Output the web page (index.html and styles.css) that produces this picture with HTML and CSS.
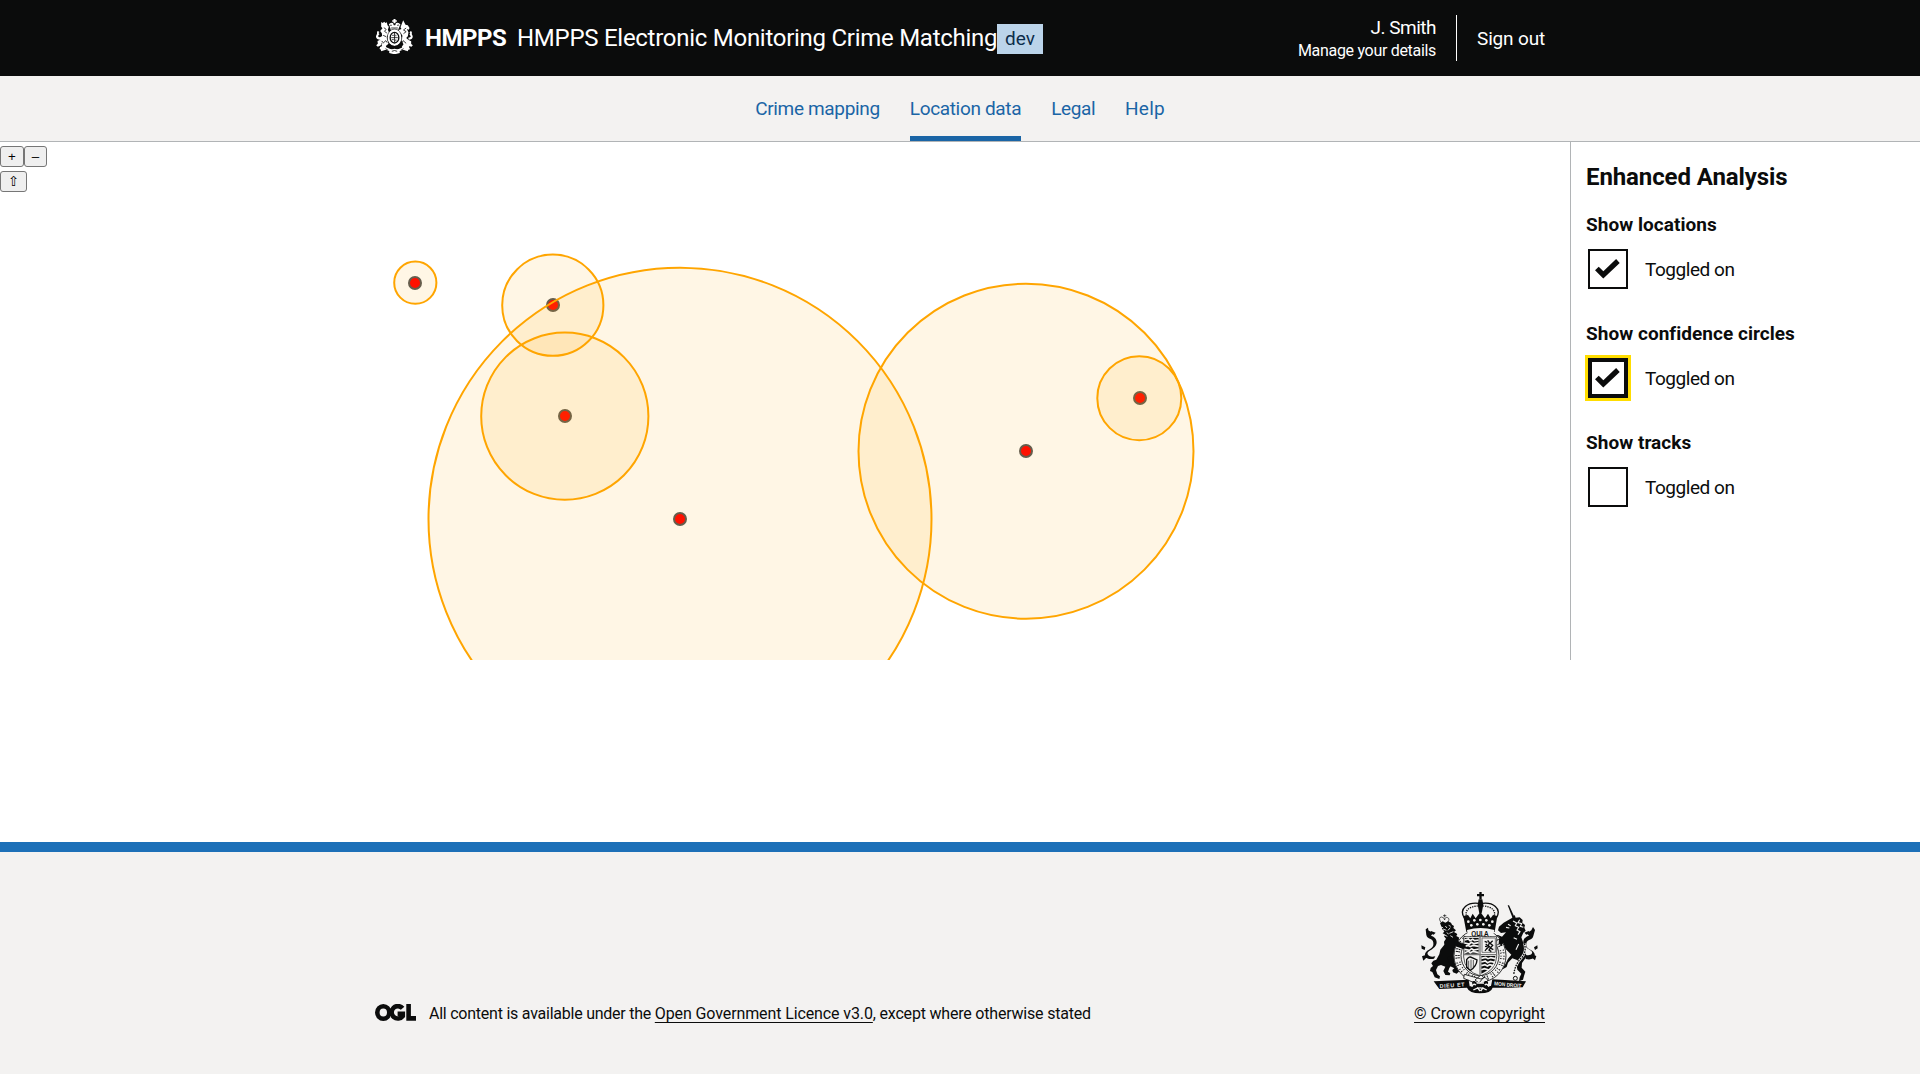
FILE: index.html
```html
<!DOCTYPE html>
<html lang="en">
<head>
<meta charset="utf-8">
<title>Location data</title>
<link rel="stylesheet" href="styles.css">
</head>
<body>
<header class="header">
  <div class="container header__inner">
    <div class="header__brand">
      <svg class="header__crest" viewBox="0 0 114 105" fill="currentColor">
        <path d="M54 0h6v4h4v4h-4v5h-6V8h-4V4h4zM40 16q5-6 12-4l3 7h4l3-7q9-2 13 5l-5 10-2 6q-11-3-22 0l-2-7z"/>
        <path d="M17 9l5 3 4-4 4 4 4-2 2 9 4 4-3 9 4 9-7 13 5 20-8 7 3 9-12 3-10-3 2-6 7-1-3-6 4-10-7-2-4-9 9-5-1-8-5-7 7-8-4-5z"/>
        <path d="M14 84l12-5 6 6q25 14 50 0l6-6 13 5-4 13-14-5q-26 13-52 0l-14 5zM42 93l15-4 15 4 1 9-16 4-16-4z"/>
        <path d="M14 62C3 62-1 53 3 48c4-5-1-9 4-12l5 3-3 3 3 4c-5 4-7 9 5 10zM6 66l8-4 6 7-4 10-9 4-5-4 5-5z"/>
        <path d="M83 4l7 13 7 2 5 8-2 5-6-2 5 10-2 12-5 5 10 8 5 12-7 6 4 8-13 3-10-3-2-8 5-7-7-13 4-13-9-11-5 1 3-7 8-3-3-5z"/>
        <path d="M100 62c11 0 14-9 10-14-3-5 2-9-4-12l-4 4 2 3-2 4c5 4 6 8-4 9zM107 67l-7-3-6 7 4 9 10 3 4-4-5-4z"/>
        <ellipse cx="57" cy="56" rx="21" ry="25"/>
        <g fill="none" stroke="#0b0c0c">
          <ellipse cx="57" cy="56" rx="22" ry="26" stroke-width="1.6"/>
          <ellipse cx="57" cy="56" rx="13" ry="16" stroke-width="4"/>
          <path d="M57 42v28M47 56h20M50 49h5M61 47v5M49 62h6M61 61v6" stroke-width="2.4"/>
          <path d="M42 21q4-4 7-2M65 19q5-2 7 2M47 27h20M25 26l7 5-5 6 7 5M23 49l9 4M92 27l-8 6 8 5-8 6M22 73l9-8 4 6M92 73l-9-8-3 6M30 89l8 5M84 89l-8 5M49 97q8-5 16 0" stroke-width="2.4"/>
        </g>
      </svg>
      <span class="header__org">HMPPS</span>
      <span class="header__title">HMPPS Electronic Monitoring Crime Matching</span>
      <span class="header__tag">dev</span>
    </div>
    <div class="header__user">
      <div class="header__account">
        <span class="header__name">J. Smith</span>
        <span class="header__manage">Manage your details</span>
      </div>
      <span class="header__signout">Sign out</span>
    </div>
  </div>
</header>
<nav class="nav">
  <a class="nav__item">Crime mapping</a>
  <a class="nav__item nav__item--current">Location data</a>
  <a class="nav__item nav__item--legal">Legal</a>
  <a class="nav__item nav__item--help">Help</a>
</nav>
<main class="main">
  <div class="map">
    <svg class="map__canvas" viewBox="0 142 1570 518">
      <g class="map__points">
        <circle cx="415" cy="283" r="6"/>
        <circle cx="553" cy="305" r="6"/>
        <circle cx="565" cy="416" r="6"/>
        <circle cx="680" cy="519" r="6"/>
        <circle cx="1026" cy="451" r="6"/>
        <circle cx="1140" cy="398" r="6"/>
      </g>
      <g class="map__confidence">
        <circle cx="415.3" cy="282.7" r="21.1"/>
        <circle cx="552.8" cy="305.2" r="50.6"/>
        <circle cx="564.8" cy="416.2" r="83.6"/>
        <circle cx="680" cy="519.2" r="251.5"/>
        <circle cx="1026" cy="451.2" r="167.5"/>
        <circle cx="1139.3" cy="398.2" r="42"/>
      </g>
    </svg>
    <div class="map__controls">
      <div class="map__zoom"><button class="map__button">+</button><button class="map__button map__button--out">–</button></div>
      <button class="map__button map__button--north">⇧</button>
    </div>
  </div>
  <aside class="sidebar">
    <h2 class="sidebar__title">Enhanced Analysis</h2>
    <div class="toggle">
      <h3 class="toggle__title">Show locations</h3>
      <div class="toggle__row">
        <span class="checkbox"><svg class="checkbox__tick" viewBox="0 0 24 20"><path d="M1.8 10L8 16.2 22 2.8"/></svg></span>
        <span class="toggle__label">Toggled on</span>
      </div>
    </div>
    <div class="toggle">
      <h3 class="toggle__title">Show confidence circles</h3>
      <div class="toggle__row">
        <span class="checkbox checkbox--focus"><svg class="checkbox__tick" viewBox="0 0 24 20"><path d="M1.8 10L8 16.2 22 2.8"/></svg></span>
        <span class="toggle__label">Toggled on</span>
      </div>
    </div>
    <div class="toggle">
      <h3 class="toggle__title">Show tracks</h3>
      <div class="toggle__row">
        <span class="checkbox"></span>
        <span class="toggle__label">Toggled on</span>
      </div>
    </div>
  </aside>
</main>
<footer class="footer">
  <div class="container footer__inner">
    <div class="footer__licence">
      <svg class="footer__ogl" viewBox="0 0 41 17" fill="none" stroke="currentColor" stroke-width="4.6">
        <ellipse cx="8.3" cy="8.5" rx="6" ry="6.2"/>
        <path d="M27.6 4.3A6.2 6.2 0 1 0 27.8 12V9.8h-5.2"/>
        <path d="M33.6 0v14.4H41"/>
      </svg>
      <span class="footer__text">All content is available under the <a class="footer__link footer__link--licence">Open Government Licence v3.0</a><span class="footer__rest">, except where otherwise stated</span></span>
    </div>
    <div class="footer__copyright">
      <svg class="footer__crest" viewBox="60 30 360 315" fill="currentColor">
        <!-- crown -->
        <path d="M238 36h7v6h7v7h-7v9h-7v-9h-7v-7h7z"/>
        <path d="M236 58h11l3 16-5 26h-7l-5-26z"/>
        <g fill="none" stroke="currentColor">
          <path d="M193 114c-18-30 12-48 43-44M289 114c18-30-12-48-42-44" stroke-width="4"/>
          <path d="M201 114c-10-24 8-34 32-36M281 114c10-24-8-34-31-36" stroke-width="4" stroke-dasharray="4 3"/>
        </g>
        <path d="M190 108l14-3 7 10 7-14 9 14 14-19 14 19 9-14 8 14 7-10 13 3-8 48q-42-13-85 0z"/>
        <g fill="#f3f2f1"><circle cx="205" cy="125" r="4"/><circle cx="223" cy="121" r="4"/><circle cx="241" cy="120" r="4"/><circle cx="259" cy="121" r="4"/><circle cx="277" cy="125" r="4"/><circle cx="214" cy="136" r="4"/><circle cx="232" cy="133" r="4"/><circle cx="250" cy="133" r="4"/><circle cx="268" cy="136" r="4"/></g>
        <!-- lion -->
        <g fill="none" stroke="currentColor" stroke-width="2">
          <path d="M122 126q-8-14 3-15 8 1 9 9 1-10 9-7 7 3 1 13M129 107h10M134 103v9"/>
        </g>
        <path d="M120 129l8-5 8 4 8-4 9 4 3 6 6 4-2 6 8 7-6 5 10 6-3 6 9 5-2 5 12 9 15 4 4 9-9 5-12-3-13-5 3 12-9 17-5 16 16 5 9 10-3 10-4-4-12-7-13-2-7 10-4 11 7 5-2 6-13-1-6-12 6-13-13-5-9 3-6 12 4 13 8 6-2 8-14-5-7-16-7-3 2-9 7-6-5-8 6-8 9-3 9-16 3-14 12-15-1-9 6-9-6-7 4-5-8-4 5-6-6-6z"/>
        <path d="M142 232c15-9 28 6 25 20l10 6 1 16-8 7-11-4-2-7 6-5-13-7z"/>
        <path d="M102 236c-20 5-31-5-26-17 6-13 27-11 24-31-2-15-18-8-21-23l-2-17 7-5 1 8 14 9-6 7c18 5 22 23 11 34-12 12-24 13-21 22 3 7 12 8 23 6zM64 196l12 6-2 8-9-4zM66 229l8-3 5 7-9 9zM93 153l14 5-6 6-12-4z"/>
        <path d="M122 141l7 2M136 138l5 6M151 143l-7 8M160 155l-12 5M126 154l6 2M134 165l8 4M151 167l8 5M129 147l10 4M146 136l6 3M140 158l6 4M116 199l-9 13" fill="none" stroke="#f3f2f1" stroke-width="2.6"/>
        <!-- unicorn -->
        <path d="M323 76l4 0 16 34-5 5z"/>
        <path d="M337 113l7-8 3 8 12-1 9 8-1 8 8 7-2 8 4 9-7 6-6 14 5 14 6 14-2 14 7 13-5 9-9 13-1 14 11 12-4 13-3 11-12 5 2-12 5-11-12-12-2-15 3-13-16-6-13 13-4 13-12 7 1-11 7-4 8-17 10-12-17-17-16-22-17-3-7 10-9-2-3-13 9-11 20-1 12 5 12-13-15 2-9-8 3-11 14-12z"/>
        <path d="M377 237c18 5 32-4 26-17-7-14-27-10-24-29 2-15 18-9 21-23l5-18-6-9-5 10-13 9 6 7c-17 4-22 21-12 32 12 12 24 13 21 21-3 6-10 7-20 5zM412 196l-10 6 3 8 8-5zM409 228l-8-3-5 8 9 8zM386 153l-13 5 6 6 11-4z"/>
        <path d="M339 123l11 6-4 8 10 5-5 8 9 5-6 9M359 119l-5 9 11 3-4 8 9 3M324 133l8 4M318 142l10 2M351 178l-10-5M356 192l-8 17" fill="none" stroke="#f3f2f1" stroke-width="3.4"/>
        <path d="M373 190q8 27-10 45t-22 50" fill="none" stroke="#f3f2f1" stroke-width="7"/>
        <path d="M373 190q8 27-10 45t-22 50" fill="none" stroke="currentColor" stroke-width="4" stroke-dasharray="5 3"/>
        <circle cx="346" cy="295" r="6" fill="none" stroke="currentColor" stroke-width="3"/>
        <!-- garter and shield -->
        <ellipse cx="240" cy="227" rx="79" ry="80" fill="#f3f2f1"/>
        <g fill="none" stroke="currentColor">
          <ellipse cx="240" cy="227" rx="78" ry="79" stroke-width="2.5"/>
          <ellipse cx="240" cy="227" rx="57" ry="60" stroke-width="2.5"/>
          <ellipse cx="240" cy="227" rx="67.5" ry="69.5" stroke-width="13" stroke-dasharray="3 5 3 9 3 4 3 11"/>
          <ellipse cx="240" cy="227" rx="67.5" ry="69.5" stroke="#f3f2f1" stroke-width="5" stroke-dasharray="5 3 7 4"/>
        </g>
        <path d="M201 150q40-12 82 0l-4 20q-37-9-74 0z" fill="#f3f2f1"/>
        <text class="footer__motto footer__motto--garter" x="214" y="168" textLength="52">QUI A</text>
        <path d="M191 170h99v60q-2 42-49 58-48-15-50-57z" fill="#f3f2f1" stroke="currentColor" stroke-width="2"/>
        <path d="M240 171v115M192 224h97" stroke="#777" stroke-width="4"/>
        <path d="M194 174h42v47h-42zM244 228h42q-1 34-42 53z"/>
        <path d="M194 180l11-3 5 5 8-4 6 4 12-2M194 189l14 3 6-5 8 4 14-3M194 199l10-3 7 4 8-4 17 3M194 208l14 3 7-5 6 4 15-3M194 218l11-4 6 4 8-4 17 4M244 235l13-3 7 4 8-3 14 3M244 246l12-3 7 5 8-4 14 3M244 257l11-3 7 4 7-4 12 3M244 269l9-3 14 4" fill="none" stroke="#f3f2f1" stroke-width="5"/>
        <path d="M246 174h40v43h-40z" fill="none" stroke="#777" stroke-width="3"/>
        <path d="M255 213l6-9M257 192l10 8-8 8M263 181l5 7-3 9 7 6-5 7 7 5M278 182l-8 8 8 6-7 8 9 5M254 184l8 3M255 199l7 1" fill="none" stroke="currentColor" stroke-width="4"/>
        <path d="M200 262V239q8-12 16-6l15 7q-1 19-20 31z" fill="none" stroke="currentColor" stroke-width="4"/>
        <path d="M206 242v22M213 239v27M220 240v23" stroke="currentColor" stroke-width="2"/>
        <!-- foreleg paws over the garter -->
        <path d="M160 174l23 15 13 4 2 10-8 4-24-8zM297 176l25-8 12 9-22 8-7 11-9-4z"/>
        <path d="M193 283l50 14 12-5 9 9-20 16-53-22zM225 300l18-15 8 7-14 17z" fill="#f3f2f1" stroke="currentColor" stroke-width="2.5"/>
        <!-- scroll -->
        <path d="M101 304l105-5 3 20 10 0q-7-18 5-16 13 14 32 0 13-1 6 15l11 0 4-20 101 6-10 18q-26 2-51 1l-39 0q-5 17-38 17-32 0-39-17l-83 4z"/>
        <path d="M215 320q5-11 13-5M267 320q-5-11-13-5M220 330q21-13 40 0M232 322l8 11M250 322l-8 11M230 309h22" fill="none" stroke="#f3f2f1" stroke-width="4"/>
        <g fill="#f3f2f1"><text class="footer__motto" transform="translate(119 324) rotate(-4)" textLength="75">DIEU ET</text><text class="footer__motto" transform="translate(282 316) rotate(5)" textLength="82" lengthAdjust="spacingAndGlyphs">MON DROIT</text></g>
      </svg>
      <a class="footer__link">© Crown copyright</a>
    </div>
  </div>
</footer>
</body>
</html>
```
FILE: styles.css
```css
* { box-sizing: border-box; }

body {
  margin: 0;
  min-height: 1074px;
  display: flex;
  flex-direction: column;
  font: 19px/25px Roboto, "Liberation Sans", sans-serif;
  color: #0b0c0c;
  background: #fff;
}

.container { width: 1170px; margin: 0 auto; }

.header { height: 76px; background: #0b0c0c; color: #fff; }
.header__inner { display: flex; justify-content: space-between; height: 76px; }
.header__brand { display: flex; align-items: flex-start; padding-top: 19px; }
.header__crest { width: 39px; height: 35px; margin-right: 11px; }
.header__org { width: 92px; font-size: 24px; font-weight: 700; letter-spacing: -0.5px; line-height: 37px; white-space: nowrap; }
.header__org, .header__title { margin-top: 1px; }
.header__title { width: 480px; font-size: 24px; line-height: 37px; letter-spacing: -0.27px; white-space: nowrap; }
.header__tag { width: 46px; height: 30px; margin-top: 5px; text-align: center; line-height: 30px; background: #bbd4ea; color: #0c2d4a; }
.header__user { display: flex; padding-top: 15px; }
.header__account { display: flex; flex-direction: column; align-items: flex-end; height: 46px; padding-right: 20px; border-right: 1px solid #fff; white-space: nowrap; }
.header__name { line-height: 25px; letter-spacing: -0.5px; }
.header__manage { font-size: 16px; line-height: 21px; letter-spacing: -0.31px; }
.header__signout { width: 88px; padding-left: 20px; line-height: 47px; letter-spacing: -0.15px; white-space: nowrap; }

.nav { display: flex; justify-content: center; gap: 30px; height: 66px; background: #f3f2f1; border-bottom: 1px solid #b1b4b6; }
.nav__item { height: 65px; line-height: 65px; color: #1a65a6; letter-spacing: -0.34px; white-space: nowrap; }
.nav__item--current { border-bottom: 5px solid #1a65a6; }
.nav__item--legal { letter-spacing: -0.4px; }
.nav__item--help { letter-spacing: 0.2px; }

.main { display: flex; height: 518px; }
.map { position: relative; flex: 1; overflow: hidden; }
.map__canvas { display: block; width: 1570px; height: 518px; }
.map__points { fill: #f00; stroke: #555; stroke-width: 2; }
.map__confidence { fill: rgba(255, 165, 0, 0.1); stroke: orange; stroke-width: 2; }
.map__controls { position: absolute; top: 4px; left: 0; display: flex; flex-direction: column; gap: 4px; }
.map__zoom { display: flex; }
.map__button { width: 24px; height: 21px; padding: 0; border: 1px solid #767676; border-radius: 3px; background: #efefef; color: #000; font: 13.333px/17px "Liberation Sans", "DejaVu Sans", sans-serif; }
.map__button--out { width: 23px; }
.map__button--north { width: 27px; }

.sidebar { width: 350px; padding: 20px 15px; border-left: 1px solid #b1b4b6; }
.sidebar__title { margin: 0 0 20px; font-size: 24px; line-height: 30px; letter-spacing: -0.1px; }
.toggle { height: 109px; }
.toggle__title { margin: 0; font-size: 19px; line-height: 25px; letter-spacing: 0.04px; }
.toggle__row { display: flex; align-items: center; gap: 17px; margin: 12px 0 0 2px; height: 40px; }
.toggle__label { letter-spacing: -0.46px; }
.checkbox { display: flex; width: 40px; height: 40px; padding: 7px 0 0 5px; border: 2px solid #0b0c0c; }
.checkbox--focus { padding: 5px 0 0 3px; border-width: 4px; box-shadow: 0 0 0 3px #fd0; }
.checkbox__tick { width: 25px; height: 21px; fill: none; stroke: #0b0c0c; stroke-width: 5; }

.footer { margin-top: auto; height: 232px; padding-top: 40px; border-top: 10px solid #1d70b8; background: #f3f2f1; font-size: 16px; line-height: 20px; }
.footer__inner { display: flex; justify-content: space-between; height: 132px; }
.footer__licence { display: flex; align-items: flex-end; gap: 13px; }
.footer__ogl { width: 41px; height: 17px; margin-bottom: 3px; }
.footer__text { letter-spacing: -0.24px; white-space: nowrap; }
.footer__link { text-decoration: underline 1px; text-underline-offset: 3px; text-decoration-skip-ink: none; letter-spacing: -0.09px; white-space: nowrap; }
.footer__link--licence { letter-spacing: -0.11px; }
.footer__rest { letter-spacing: -0.2px; }
.footer__copyright { display: flex; flex-direction: column; align-items: center; justify-content: space-between; }
.footer__crest { width: 120px; height: 105px; margin-top: -2px; }
.footer__motto { font: 700 16px "Liberation Sans", sans-serif; }
.footer__motto--garter { font-size: 19px; }
```
